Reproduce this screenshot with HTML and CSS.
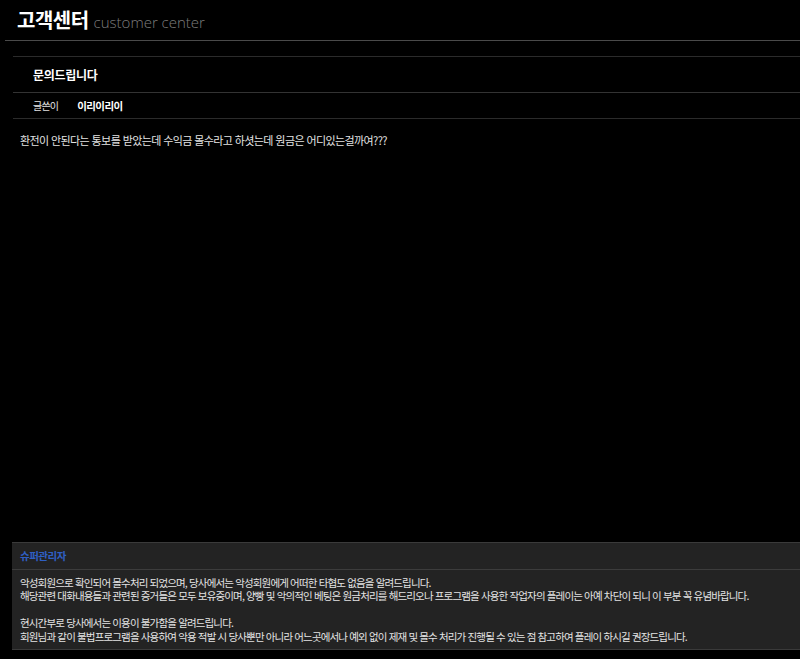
FILE: index.html
```html
<!DOCTYPE html>
<html lang="ko">
<head>
<meta charset="utf-8">
<title>고객센터</title>
<link rel="stylesheet" href="styles.css">
</head>
<body>
<div class="page">
  <header class="top">
    <h1 class="top-title">고객센터<span class="top-sub">customer center</span></h1>
  </header>

  <article class="post">
    <div class="post-title">문의드립니다</div>
    <div class="post-meta">
      <span class="meta-label">글쓴이</span>
      <span class="meta-author">이리이리이</span>
    </div>
    <div class="post-body">환전이 안된다는 통보를 받았는데 수익금 몰수라고 하셧는데 원금은 어디있는걸까여???</div>
  </article>

  <section class="reply">
    <div class="reply-head">슈퍼관리자</div>
    <div class="reply-body">
      <p>악성회원으로 확인되어 몰수처리 되었으며, 당사에서는 악성회원에게 어떠한 타협도 없음을 알려드립니다.<br>해당관련 대화내용들과 관련된 증거들은 모두 보유중이며, 양빵 및 악의적인 베팅은 원금처리를 해드리오나 프로그램을 사용한 작업자의 플레이는 아예 차단이 되니 이 부분 꼭 유념바랍니다.</p>
      <p>현시간부로 당사에서는 이용이 불가함을 알려드립니다.<br>회원님과 같이 불법프로그램을 사용하여 악용 적발 시 당사뿐만 아니라 어느곳에서나 예외 없이 제재 및 몰수 처리가 진행될 수 있는 점 참고하여 플레이 하시길 권장드립니다.</p>
    </div>
  </section>
</div>
</body>
</html>
```

FILE: styles.css
```css
html, body {
  margin: 0;
  padding: 0;
  background: #000;
}

body {
  font-family: "Noto Sans CJK KR", "Noto Sans", sans-serif;
  font-size: 11px;
  color: #e4e4e4;
}

.page {
  display: flex;
  flex-direction: column;
  min-height: 659px;
}

/* page heading */
.top {
  margin-left: 5px;
  height: 40px;
  border-bottom: 1px solid #4a4a4a;
  padding-left: 12px;
  display: flex;
  align-items: center;
}

.top-title {
  margin: 0;
  font-size: 20px;
  font-weight: 700;
  color: #fff;
  line-height: 1;
  letter-spacing: -0.5px;
  white-space: nowrap;
}

.top-sub {
  margin-left: 5px;
  font-family: "Open Sans", sans-serif;
  font-size: 15px;
  font-weight: 300;
  color: #7d7d7d;
  letter-spacing: 0;
}

/* question */
.post {
  margin: 15px 0 0 13px;
  border-top: 1px solid #2b2b2b;
  flex: 1;
}

.post-title {
  height: 35px;
  padding-left: 20px;
  display: flex;
  align-items: center;
  border-bottom: 1px solid #333;
  font-size: 12px;
  font-weight: 700;
  color: #fff;
  letter-spacing: -0.3px;
}

.post-meta {
  height: 25px;
  padding-left: 20px;
  display: flex;
  align-items: center;
  gap: 19px;
  border-bottom: 1px solid #2b2b2b;
}

.meta-label {
  font-size: 10px;
  letter-spacing: -0.8px;
}

.meta-author {
  font-size: 10.5px;
  font-weight: 700;
  color: #fff;
  letter-spacing: -0.6px;
}

.post-body {
  padding: 14px 7px;
  line-height: 14px;
  letter-spacing: -0.6px;
}

/* answer */
.reply {
  margin: 0 0 9px 12px;
  background: #232323;
  border-top: 1px solid #3a3a3a;
  border-bottom: 1px solid #3a3a3a;
}

.reply-head {
  height: 26px;
  padding-left: 8px;
  display: flex;
  align-items: center;
  border-bottom: 1px solid #3c3c3c;
  font-size: 10.5px;
  font-weight: 700;
  color: #2f5fc4;
  letter-spacing: -0.5px;
}

.reply-body {
  padding: 6px 8px 6px;
  font-size: 10.5px;
  line-height: 13.5px;
  letter-spacing: -0.85px;
  white-space: nowrap;
}

.reply-body p {
  margin: 0 0 13.5px;
}

.reply-body p:last-child {
  margin-bottom: 0;
}
```
